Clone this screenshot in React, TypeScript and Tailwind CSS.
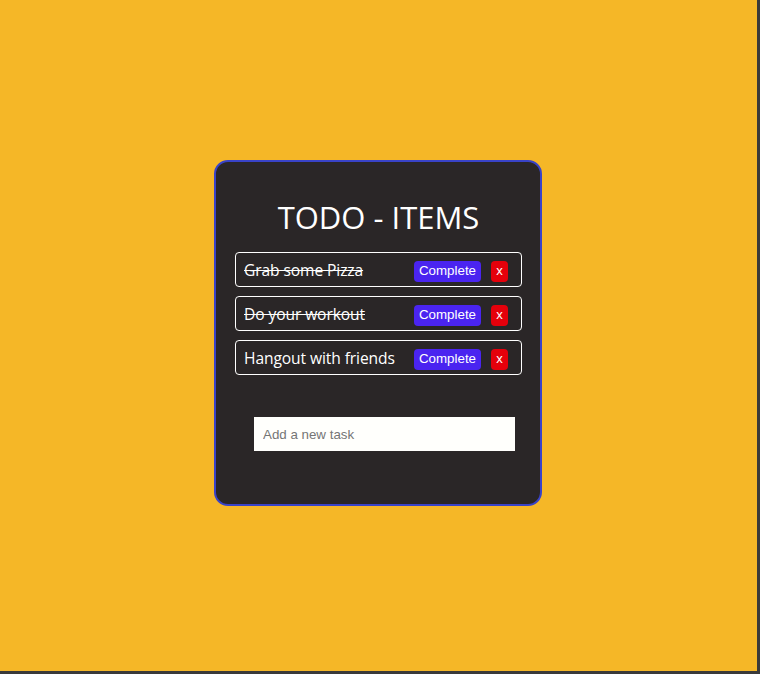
const todos = [
  { id: 1, text: 'Grab some Pizza', done: true },
  { id: 2, text: 'Do your workout', done: true },
  { id: 3, text: 'Hangout with friends', done: false },
];

export default function App() {
  return (
    <div className="w-[760px] h-[674px] bg-[#3a3a3a]">
      <div className="w-[757px] h-[671px] bg-[#f5b727] pt-[160px] pl-[214px]">
        <div className="w-[328px] h-[346px] border-2 border-[#3943c8] rounded-[14px] bg-[#2a2627] pl-[19px] pr-[18px] pt-[39px] font-['Open_Sans',sans-serif]">
          <h1 className="text-center text-white text-[31px] leading-[32px]">TODO - ITEMS</h1>
          <ul className="mt-[19px] flex flex-col gap-[9px]">
            {todos.map((t) => (
              <li
                key={t.id}
                className="h-[35px] border border-white rounded-[4px] flex items-center pl-[8px] pr-[13px]"
              >
                <span className={`mt-[2px] flex-1 text-white text-[15.6px] tracking-[-0.1px] ${t.done ? 'line-through' : ''}`}>
                  {t.text}
                </span>
                <button className="mt-[3px] h-[21px] px-[5px] rounded-[4px] bg-[#4a24f0] text-white text-[13.33px] font-['Liberation_Sans',sans-serif]">
                  Complete
                </button>
                <button className="mt-[3px] ml-[10px] w-[17px] h-[21px] rounded-[4px] bg-[#e5000b] text-white text-[13px] font-['Liberation_Sans',sans-serif]">
                  x
                </button>
              </li>
            ))}
          </ul>
          <form className="mt-[42px] pl-[19px] pr-[6px]">
            <input
              className="w-[261px] h-[34px] bg-[#fffffc] px-[9px] text-[13.33px] font-['Liberation_Sans',sans-serif] placeholder:text-[#757575] outline-none"
              placeholder="Add a new task"
            />
          </form>
        </div>
      </div>
    </div>
  );
}
